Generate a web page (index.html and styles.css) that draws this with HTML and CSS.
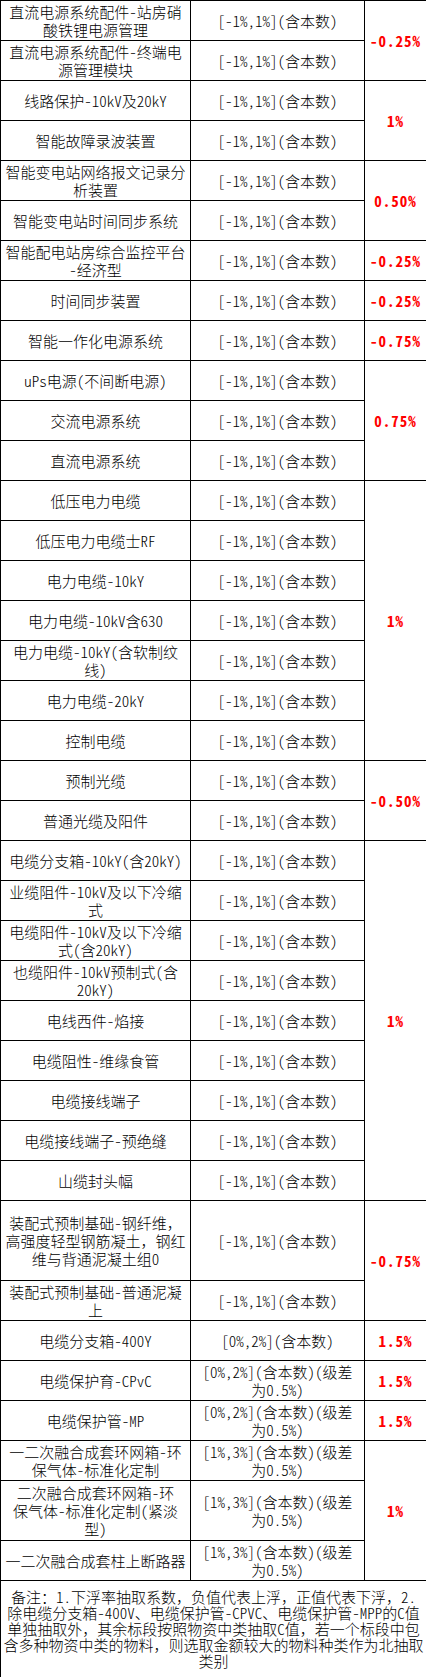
FILE: index.html
```html
<!DOCTYPE html>
<html lang="zh-CN">
<head>
<meta charset="utf-8">
<title>下浮率抽取系数</title>
<link rel="stylesheet" href="styles.css">
</head>
<body>
<table class="sheet">
  <colgroup>
    <col class="col-name">
    <col class="col-range">
    <col class="col-pct">
  </colgroup>
  <tbody>
    <tr class="r40"><td>直流电源系统配件-站房硝<br>酸铁锂电源管理</td><td>[-1%,1%](含本数)</td><td class="pct" rowspan="2">-0.25%</td></tr>
    <tr class="r40"><td>直流电源系统配件-终端电<br>源管理模块</td><td>[-1%,1%](含本数)</td></tr>
    <tr class="r40"><td>线路保护-10kV及20kY</td><td>[-1%,1%](含本数)</td><td class="pct" rowspan="2">1%</td></tr>
    <tr class="r40"><td>智能故障录波装置</td><td>[-1%,1%](含本数)</td></tr>
    <tr class="r40"><td>智能变电站网络报文记录分<br>析装置</td><td>[-1%,1%](含本数)</td><td class="pct" rowspan="2">0.50%</td></tr>
    <tr class="r40"><td>智能变电站时间同步系统</td><td>[-1%,1%](含本数)</td></tr>
    <tr class="r40"><td>智能配电站房综合监控平台<br>-经济型</td><td>[-1%,1%](含本数)</td><td class="pct">-0.25%</td></tr>
    <tr class="r40"><td>时间同步装置</td><td>[-1%,1%](含本数)</td><td class="pct">-0.25%</td></tr>
    <tr class="r40"><td>智能一作化电源系统</td><td>[-1%,1%](含本数)</td><td class="pct">-0.75%</td></tr>
    <tr class="r40"><td>uPs电源(不间断电源)</td><td>[-1%,1%](含本数)</td><td class="pct" rowspan="3">0.75%</td></tr>
    <tr class="r40"><td>交流电源系统</td><td>[-1%,1%](含本数)</td></tr>
    <tr class="r40"><td>直流电源系统</td><td>[-1%,1%](含本数)</td></tr>
    <tr class="r40"><td>低压电力电缆</td><td>[-1%,1%](含本数)</td><td class="pct" rowspan="7">1%</td></tr>
    <tr class="r40"><td>低压电力电缆士RF</td><td>[-1%,1%](含本数)</td></tr>
    <tr class="r40"><td>电力电缆-10kY</td><td>[-1%,1%](含本数)</td></tr>
    <tr class="r40"><td>电力电缆-10kV含630</td><td>[-1%,1%](含本数)</td></tr>
    <tr class="r40"><td>电力电缆-10kY(含软制纹<br>线)</td><td>[-1%,1%](含本数)</td></tr>
    <tr class="r40"><td>电力电缆-20kY</td><td>[-1%,1%](含本数)</td></tr>
    <tr class="r40"><td>控制电缆</td><td>[-1%,1%](含本数)</td></tr>
    <tr class="r40"><td>预制光缆</td><td>[-1%,1%](含本数)</td><td class="pct" rowspan="2">-0.50%</td></tr>
    <tr class="r40"><td>普通光缆及阳件</td><td>[-1%,1%](含本数)</td></tr>
    <tr class="r40"><td>电缆分支箱-10kY(含20kY)</td><td>[-1%,1%](含本数)</td><td class="pct" rowspan="9">1%</td></tr>
    <tr class="r40"><td>业缆阻件-10kV及以下冷缩<br>式</td><td>[-1%,1%](含本数)</td></tr>
    <tr class="r40"><td>电缆阳件-10kV及以下冷缩<br>式(含20kY)</td><td>[-1%,1%](含本数)</td></tr>
    <tr class="r40"><td>也缆阳件-10kV预制式(含<br>20kY)</td><td>[-1%,1%](含本数)</td></tr>
    <tr class="r40"><td>电线西件-焰接</td><td>[-1%,1%](含本数)</td></tr>
    <tr class="r40"><td>电缆阻性-维缘食管</td><td>[-1%,1%](含本数)</td></tr>
    <tr class="r40"><td>电缆接线端子</td><td>[-1%,1%](含本数)</td></tr>
    <tr class="r40"><td>电缆接线端子-预绝缝</td><td>[-1%,1%](含本数)</td></tr>
    <tr class="r40"><td>山缆封头幅</td><td>[-1%,1%](含本数)</td></tr>
    <tr class="r80"><td>装配式预制基础-钢纤维<span class="fw">，</span><br>高强度轻型钢筋凝土<span class="fw">，</span>钢红<br>维与背通泥凝土组0</td><td>[-1%,1%](含本数)</td><td class="pct" rowspan="2">-0.75%</td></tr>
    <tr class="r40"><td>装配式预制基础-普通泥凝<br>上</td><td>[-1%,1%](含本数)</td></tr>
    <tr class="r40"><td>电缆分支箱-400Y</td><td>[0%,2%](含本数)</td><td class="pct">1.5%</td></tr>
    <tr class="r40"><td>电缆保护育-CPvC</td><td>[0%,2%](含本数)(级差<br>为0.5%)</td><td class="pct">1.5%</td></tr>
    <tr class="r40"><td>电缆保护管-MP</td><td>[0%,2%](含本数)(级差<br>为0.5%)</td><td class="pct">1.5%</td></tr>
    <tr class="r40"><td>一二次融合成套环网箱-环<br>保气体-标准化定制</td><td>[1%,3%](含本数)(级差<br>为0.5%)</td><td class="pct" rowspan="3">1%</td></tr>
    <tr class="r60"><td>二次融合成套环网箱-环<br>保气体-标准化定制(紧淡<br>型)</td><td>[1%,3%](含本数)(级差<br>为0.5%)</td></tr>
    <tr class="r40"><td>一二次融合成套柱上断路器</td><td>[1%,3%](含本数)(级差<br>为0.5%)</td></tr>
    <tr class="note-row"><td class="note" colspan="3">备注<span class="fw">：</span>1.下浮率抽取系数<span class="fw">，</span>负值代表上浮<span class="fw">，</span>正值代表下浮<span class="fw">，</span>2.<br>除电缆分支箱-400V<span class="fw">、</span>电缆保护管-CPVC<span class="fw">、</span>电缆保护管-MPP的C值<br>单独抽取外<span class="fw">，</span>其余标段按照物资中类抽取C值<span class="fw">，</span>若一个标段中包<br>含多种物资中类的物料<span class="fw">，</span>则选取金额较大的物料种类作为北抽取<br>类别</td></tr>
  </tbody>
</table>
</body>
</html>
```

FILE: styles.css
```css
html, body {
  margin: 0;
  padding: 0;
  background: #ffffff;
}

body {
  font-family: "Noto Sans CJK SC", "Noto Sans", sans-serif;
  font-size: 15px;
  font-weight: 300;
  color: #000000;
}

.sheet {
  border-collapse: collapse;
  table-layout: fixed;
  width: 426px;
}

.col-name { width: 190px; }
.col-range { width: 174px; }
.col-pct { width: 62px; }

.sheet td {
  border: 1px solid #000000;
  padding: 0 2px;
  text-align: center;
  vertical-align: middle;
  line-height: 18px;
  white-space: nowrap;
  font-feature-settings: "hwid";
}

.fw {
  font-feature-settings: normal;
}

.r40 { height: 40px; }
.r60 { height: 60px; }
.r80 { height: 80px; }
.note-row { height: 97px; }

.sheet td.pct {
  color: #ff0000;
  font-weight: bold;
  letter-spacing: 1px;
}

.sheet td.note {
  line-height: 16px;
  padding: 0;
}
```
